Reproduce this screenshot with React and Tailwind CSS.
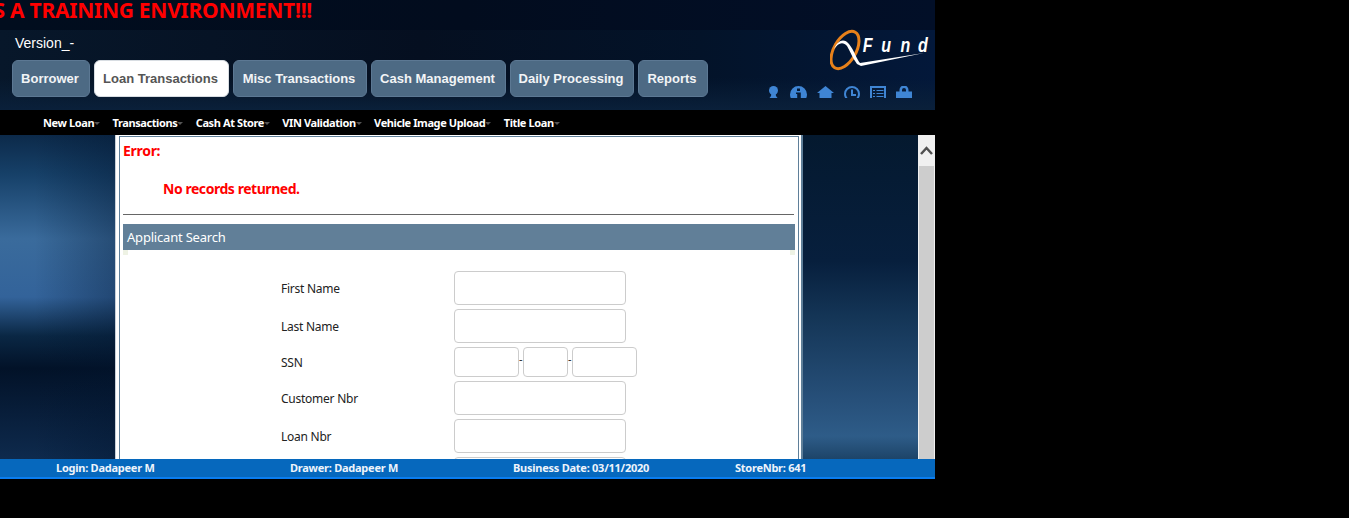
import React from "react";

const tabs = [
  ["Borrower", "w-[78px]"],
  ["Loan Transactions", "w-[135px]"],
  ["Misc Transactions", "w-[134px]"],
  ["Cash Management", "w-[135px]"],
  ["Daily Processing", "w-[124px]"],
  ["Reports", "w-[70px]"],
];
const menus = ["New Loan", "Transactions", "Cash At Store", "VIN Validation", "Vehicle Image Upload", "Title Loan"];

function Label({ children }) {
  return <div className="w-[173px] pt-[2px] text-[12px] tracking-[-0.25px] text-[#222]">{children}</div>;
}

function Field({ label }) {
  return (
    <div className="flex items-center mb-1">
      <Label>{label}</Label>
      <div className="w-[172px] h-[34px] border border-[#ccc] rounded-[4px] bg-white" />
    </div>
  );
}

function Logo() {
  return (
    <svg width="100" height="44" viewBox="0 0 100 44" className="block">
      <ellipse cx="15" cy="22" rx="11" ry="20.5" transform="rotate(30 15 22)" fill="none" stroke="#e8811a" strokeWidth="3" />
      <path d="M4 21 C8 12 14 10 19 16 C24 22 27 32 30 35 L94 25 L31 38 L27 36 C23 31 20 23 17 18 C13 13 8 15 4 21Z" fill="#fff" />
      <g transform="scale(0.8 1)">
        <text x="41 64 88 110" y="24" fill="#fff" fontSize="20" fontWeight="700" fontStyle="italic" fontFamily="Liberation Sans, sans-serif">Fund</text>
      </g>
    </svg>
  );
}

function Icons() {
  return (
    <div className="flex items-start gap-[10px] h-[12px] overflow-hidden text-[#3f85d4]">
      <svg width="12" height="12" viewBox="0 0 12 12" fill="currentColor"><ellipse cx="5.5" cy="4.5" rx="4.5" ry="4.5" /><path d="M3.5 7h4l.5 3 1.5 2h-8L3 10z" /></svg>
      <svg width="17" height="12" viewBox="0 0 17 12" fill="currentColor"><path fillRule="evenodd" d="M8.5 0a8.5 8.5 0 1 1 0 17 8.5 8.5 0 0 1 0-17zM7 2.5v2.6h3V2.5zM6 6.5V8h1.2v4h3.6V6.5z" /></svg>
      <svg width="17" height="12" viewBox="0 0 17 12" fill="currentColor"><path d="M8.5 0 17 7h-2.5v5h-12V7H0z" /></svg>
      <svg width="16" height="12" viewBox="0 0 16 12" fill="none" stroke="currentColor" strokeWidth="2"><circle cx="8" cy="8" r="7" /><path d="M8 3.5V9h4" /></svg>
      <svg width="16" height="12" viewBox="0 0 16 12" fill="none" stroke="currentColor"><path d="M1 13V1h14v12" strokeWidth="2" /><path d="M3 4.5h2M6.5 4.5h7M3 7.5h2M6.5 7.5h7M3 10.5h2M6.5 10.5h7" /></svg>
      <svg width="16" height="12" viewBox="0 0 16 12" fill="currentColor"><path fillRule="evenodd" d="M3.5 5.5V4a4 4 0 0 1 9 0v1.5H16V12H0V5.5zM6 5.5h4V4a2 2 0 0 0-4 0z" /></svg>
    </div>
  );
}

export default function App() {
  return (
    <div className="w-[1349px] h-[518px] bg-black overflow-hidden font-['Liberation_Sans',sans-serif]">
      <div className="w-[935px]">
        <header className="h-[110px] flex flex-col bg-[linear-gradient(90deg,#07172a_0%,#050f20_45%,#031329_75%,#03183a_100%)]">
          <div className="h-[30px] bg-[linear-gradient(90deg,#010d1e_0%,#020c1e_50%,#020f28_100%)] overflow-hidden">
            <div className="w-[312px] flex justify-end whitespace-nowrap overflow-hidden">
              <div className="shrink-0 -mt-[4px] text-[21px] leading-[28px] tracking-[-0.25px] font-bold text-[#f00] font-['Noto_Sans',sans-serif]">THIS IS A TRAINING ENVIRONMENT!!!</div>
            </div>
          </div>
          <div className="flex justify-between flex-1 bg-[linear-gradient(180deg,transparent_60%,#0a203a_100%)]">
            <div className="pl-[12px]">
              <div className="pl-[3px] pt-[5px] h-[30px] text-[14px] leading-[16px] text-white">Version_-</div>
              <nav className="flex gap-[4px]">
                {tabs.map(([t, w], i) => (
                  <div key={t} className={`${w} h-[37px] pr-[2px] rounded-[6px] text-[13px] font-bold flex items-center justify-center border ${i === 1 ? "bg-white text-[#555] border-[#d8dde2]" : "bg-[#4d6a84] text-[#f2f4f6] border-[#5c7893]"}`}>{t}</div>
                ))}
              </nav>
            </div>
            <div className="w-[170px] flex flex-col items-end">
              <div className="-mt-[2px] pr-[5px]"><Logo /></div>
              <div className="mt-[14px] pr-[23px]"><Icons /></div>
            </div>
          </div>
        </header>
        <div className="h-[25px] pt-[1px] bg-black flex items-center pl-[43px] gap-[12.4px] text-[11px] tracking-[-0.4px] font-bold text-white font-['Noto_Sans',sans-serif]">
          {menus.map((m) => (
            <div key={m} className="flex items-center">
              <span>{m}</span>
              <span className="w-0 h-0 border-x-[3px] border-x-transparent border-t-[3px] border-t-[#555]" />
            </div>
          ))}
        </div>
        <main className="h-[324px] flex overflow-hidden">
          <div className="w-[115px] shrink-0 bg-[linear-gradient(90deg,transparent_30%,rgba(2,20,45,0.35)_100%),linear-gradient(180deg,#0c2a4a_0%,#164068_12%,#3a6b9c_32%,#33639a_50%,#0a2744_62%,#021228_72%,#0e2a4d_100%)]" />
          <div className="w-[688px] shrink-0 bg-white pl-[4px] pt-[1px] pr-[2px] border-l border-[#c8d0d8] border-r-2 border-r-[#5f7f99]">
            <div className="w-[680px] -ml-[1px] h-full bg-white border border-[#5f7f99] border-b-0 px-[3px] font-['Noto_Sans',sans-serif]">
              <div className="pt-[5px] h-[28px] text-[14px] leading-[18px] tracking-[-0.3px] font-bold text-[#f00]">Error:</div>
              <div className="pl-[40px] pt-[14px] h-[49px] text-[14px] leading-[20px] tracking-[-0.45px] font-bold text-[#f00]">No records returned.</div>
              <div className="h-px bg-[#666] mr-[1px]" />
              <div className="mt-[9px] h-[26px] bg-[#617f98] text-white text-[13px] tracking-[-0.2px] leading-[26px] pl-[4px]">Applicant Search</div>
              <div className="h-[5px] flex justify-between">
                <div className="w-[5px] bg-[#eef2e4]" />
                <div className="w-[5px] bg-[#eef2e4]" />
              </div>
              <div className="pl-[158px] pt-[16px]">
                <Field label="First Name" />
                <Field label="Last Name" />
                <div className="flex items-center mb-1">
                  <Label>SSN</Label>
                  <div className="w-[65px] h-[30px] border border-[#ccc] rounded-[4px]" />
                  <span className="w-[4px] mb-[8px] text-[11px] text-[#222] leading-none">-</span>
                  <div className="w-[45px] h-[30px] border border-[#ccc] rounded-[4px]" />
                  <span className="w-[4px] mb-[8px] text-[11px] text-[#222] leading-none">-</span>
                  <div className="w-[65px] h-[30px] border border-[#ccc] rounded-[4px]" />
                </div>
                <Field label="Customer Nbr" />
                <Field label="Loan Nbr" />
                <Field label="" />
              </div>
            </div>
          </div>
          <div className="flex-1 bg-[linear-gradient(180deg,#04192f_0%,#071f3d_39%,#143556_56%,#27507a_82%,#2e5c88_93%,#1d4468_100%)]" />
          <div className="w-[17px] shrink-0 bg-[#cdcdcd] border-x border-[#f0f0f0] flex flex-col">
            <div className="h-[31px] bg-[#f0f0f0] flex items-center justify-center">
              <svg width="13" height="9" viewBox="0 0 13 9" fill="none" stroke="#505050" strokeWidth="2.5"><path d="M1 8 6.5 2 12 8" /></svg>
            </div>
          </div>
        </main>
        <footer className="h-[20px] bg-[#0668bd] border-b-2 border-[#0a7df0] text-[11px] tracking-[-0.25px] font-bold text-[#eef4fb] font-['Noto_Sans',sans-serif] flex items-center">
          <span className="ml-[56px] w-[234px]">Login: Dadapeer M</span>
          <span className="w-[223px]">Drawer: Dadapeer M</span>
          <span className="w-[222px]">Business Date: 03/11/2020</span>
          <span>StoreNbr: 641</span>
        </footer>
      </div>
    </div>
  );
}
